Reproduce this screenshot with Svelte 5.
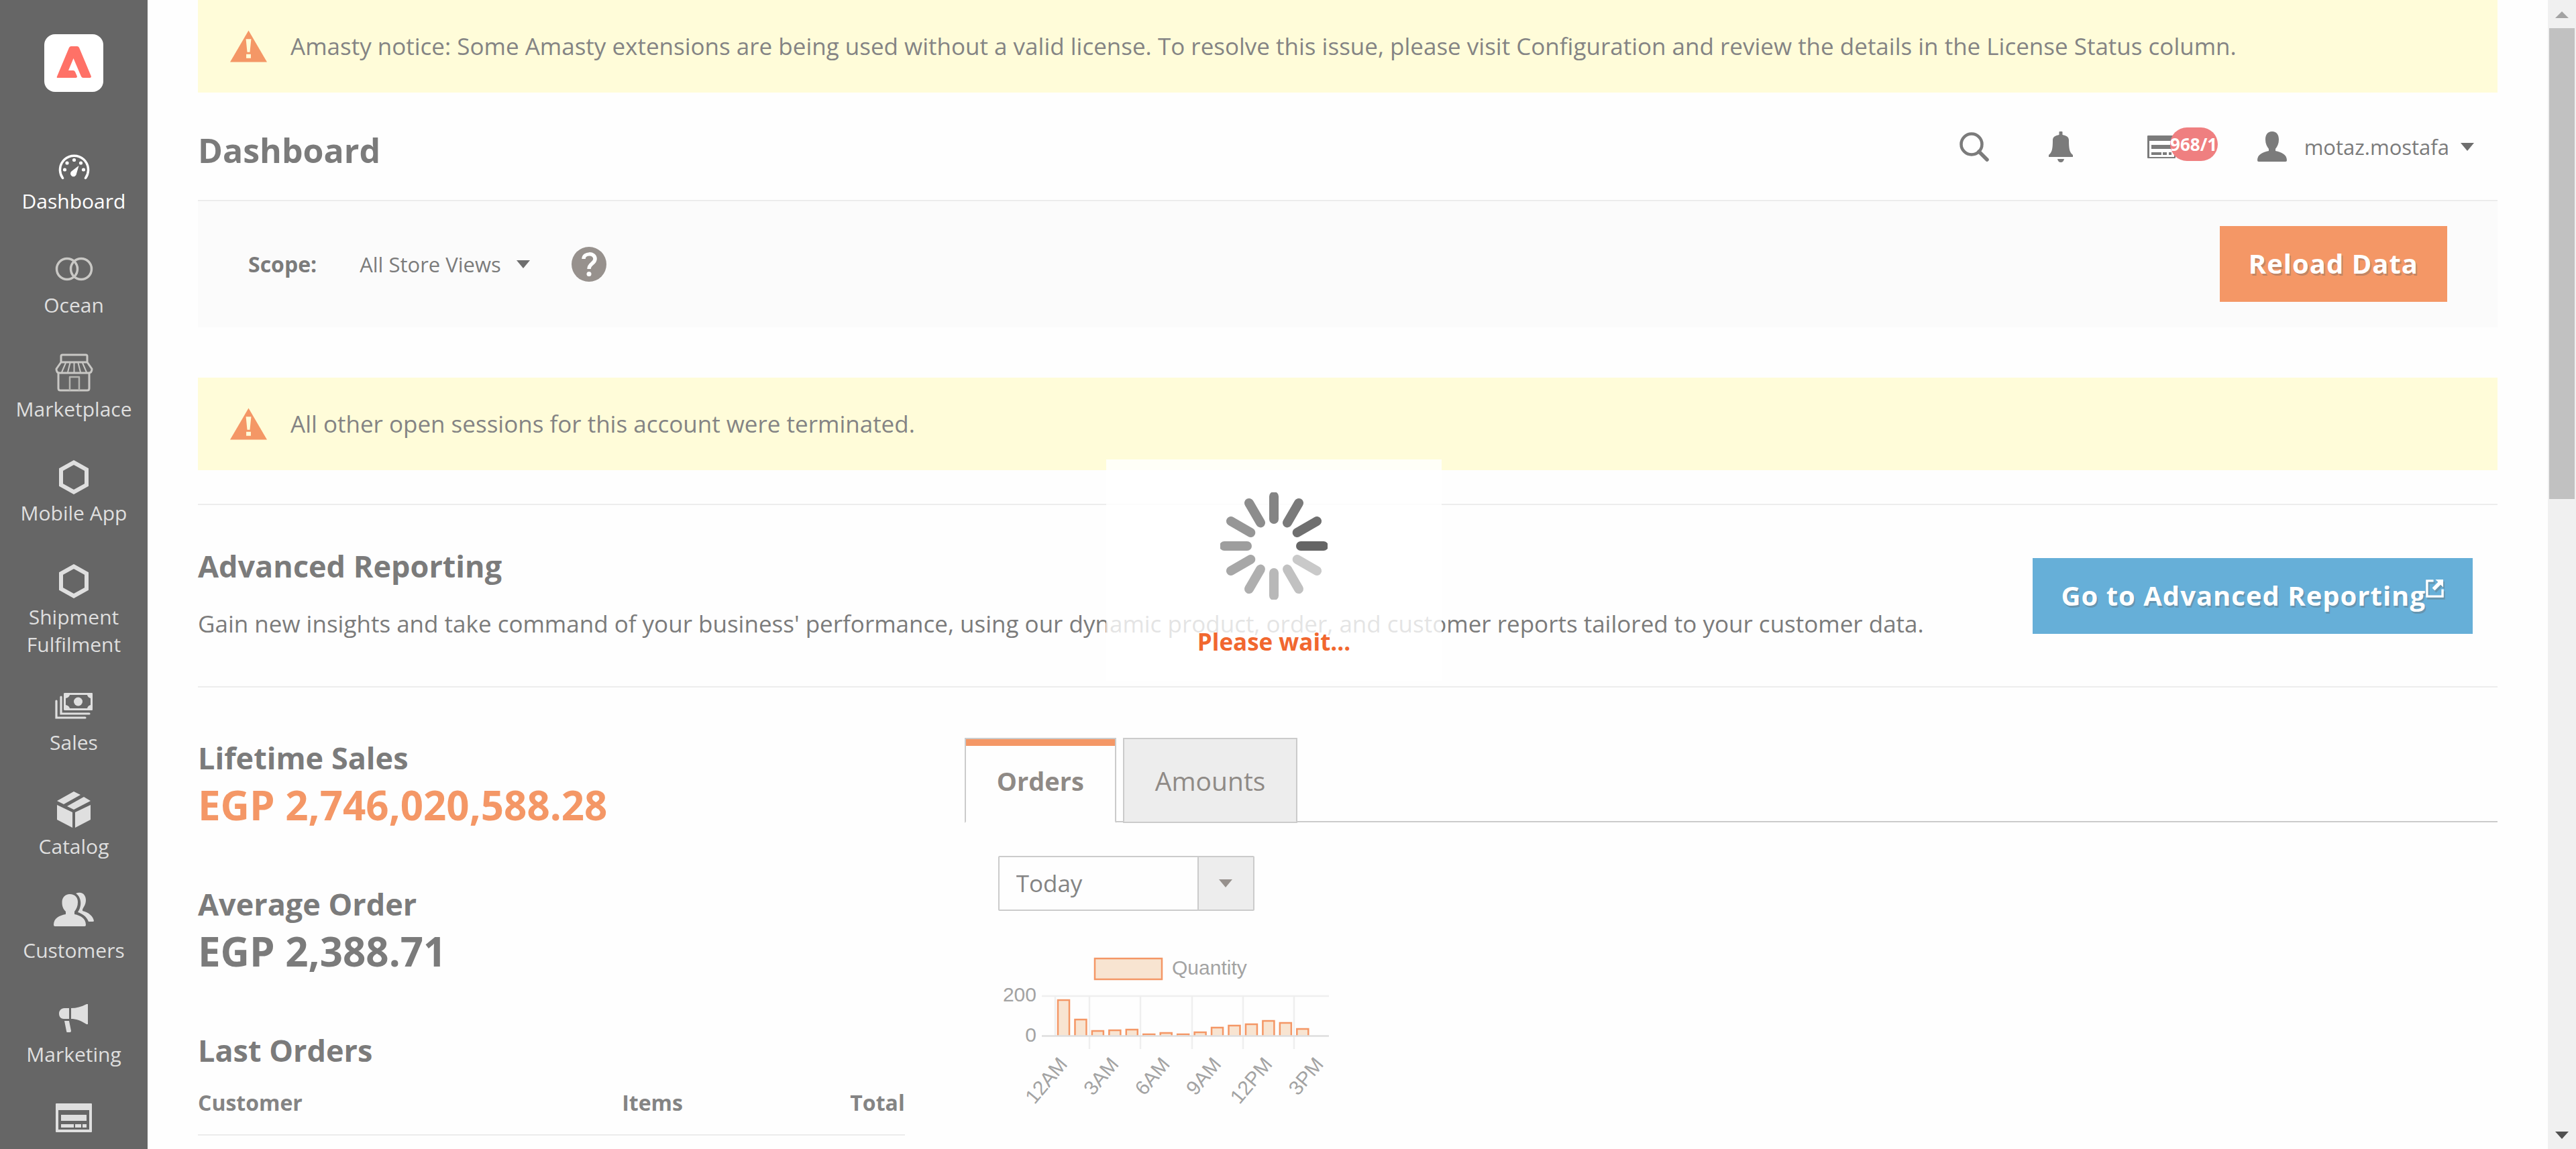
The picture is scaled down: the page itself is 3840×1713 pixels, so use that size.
<script>
  const menu = [
    { id: 'dashboard', label: 'Dashboard', active: true },
    { id: 'ocean', label: 'Ocean' },
    { id: 'market', label: 'Marketplace' },
    { id: 'hex', label: 'Mobile App' },
    { id: 'hex', label: 'Shipment Fulfilment' },
    { id: 'sales', label: 'Sales' },
    { id: 'catalog', label: 'Catalog' },
    { id: 'customers', label: 'Customers' },
    { id: 'marketing', label: 'Marketing' },
    { id: 'content', label: '' }
  ];

  const barTops = [90, 119, 136, 135, 134, 141, 139, 141, 138, 131, 128, 126, 121, 124, 133];
  const pitch = 25.45;
  const bars = barTops.map((top, i) => ({ x: 89 + i * pitch, top }));
  const hours = ['12AM', '3AM', '6AM', '9AM', '12PM', '3PM'].map((text, i) => ({
    text,
    x: 97 + i * 3 * pitch
  }));
  const gridX = [136, 212, 289, 365, 441];

  const spokes = [
    '#656565', '#c9c9c9', '#c1c1c1', '#b8b8b8', '#afafaf', '#a7a7a7',
    '#9e9e9e', '#969696', '#8d8d8d', '#848484', '#7a7a7a', '#6f6f6f'
  ];
</script>

{#snippet message(text)}
  <div class="message">
    <svg class="warn" viewBox="0 0 56 48" aria-hidden="true">
      <path d="M28 0 56 48H0Z" fill="#f49766" />
      <path d="M24 13h8l-2 20h-4zM24.500 36h7v6h-7z" fill="#fffcd9" />
    </svg>
    <p>{text}</p>
  </div>
{/snippet}

<div class="shell">
  <aside class="sidebar">
    <a class="logo" href="#home" aria-label="Home">
      <svg viewBox="0 0 88 86" aria-hidden="true">
        <path
          fill="#ff7167"
          d="M37 20Q38 18 40 18H49Q51 18 52 20L70 63Q70 65 68 65H58Q56 65 55 63L43.500 36L36 54H43Q45 54 46 56L49 63Q49 65 47 65H20Q18 65 19 63Z"
        />
      </svg>
    </a>
    <nav aria-label="Main">
      {#each menu as item}
        <a class="item" class:active={item.active} href="#{item.id}" aria-label={item.label || item.id}>
          <svg viewBox="0 0 60 60" aria-hidden="true">
            {#if item.id === 'dashboard'}
              <path d="M13.500 49.500A21 21 0 1 1 47.500 49.500" fill="none" stroke="currentColor" stroke-width="3.500" stroke-linecap="round" />
              <g fill="currentColor">
                <circle cx="16.500" cy="37" r="2.600" /><circle cx="20" cy="27" r="2.600" />
                <circle cx="30.500" cy="22.500" r="2.600" /><circle cx="40.500" cy="27" r="2.600" />
                <circle cx="44.500" cy="37" r="2.600" />
                <path d="M37.500 31 34 43A4.500 4.500 0 1 1 27 39Z" />
              </g>
            {:else if item.id === 'ocean'}
              <g fill="none" stroke="#c9c8c5" stroke-width="3.500">
                <circle cx="20" cy="30" r="15.500" /><circle cx="41" cy="30" r="15.500" />
              </g>
            {:else if item.id === 'market'}
              <g fill="none" stroke="#c9c8c5" stroke-width="3" stroke-linejoin="round">
                <path d="M11 14V5q0-2 2-2H48q2 0 2 2V14M11 14H50L57 24Q57 30 52 30H9Q4 30 4 24Z" />
                <path d="M7 30V53q0 3 3 3H50q3 0 3-3V30" />
                <path d="M24 56V36H38V56" stroke-width="2.500" stroke="#b5b4b0" />
                <path d="M18 15 12 29M24.500 15 21 29M30.500 15V29M36.500 15 40 29M43 15 49 29" stroke-width="2" />
              </g>
            {:else if item.id === 'hex'}
              <path d="M30 8.500 49 19V42L30 52.500 11 42V19Z" fill="none" stroke="currentColor" stroke-width="6" />
            {:else if item.id === 'sales'}
              <path d="M4 22V47H47M11 16V41H53" fill="none" stroke="currentColor" stroke-width="3.200" stroke-linecap="round" />
              <path
                fill="currentColor"
                fill-rule="evenodd"
                d="M17 10H57q1 0 1 1V35q0 1-1 1H17q-2 0-2-1V11q0-1 2-1ZM24 13Q23 17 18 18V28Q23 29 24 33H50Q51 29 55 28V18Q51 17 50 13Z"
              />
              <circle cx="36.500" cy="23" r="6.500" fill="currentColor" />
            {:else if item.id === 'catalog'}
              <path
                fill="currentColor"
                d="M30 2 40 7 15 21 5 16ZM45 10 55 16 30 29 20 24ZM5 22 28 33V56L5 44ZM55 22 32 33V56L55 44Z"
              />
            {:else if item.id === 'customers'}
              <path
                fill="currentColor"
                d="M24 0C32 0 36 5 36 12C36 18 34 22 31 26V30C40 32 48 36 48 46Q48 48 46 48H2Q0 48 0 46C0 36 8 32 18 30V26C14 22 12.500 18 12.500 12C12.500 5 17 0 24 0Z"
              />
              <path
                fill="currentColor"
                d="M33-1C43-5 48 2 48 9C48 16 44 20 43 23V25C52 27 59 33 60 40Q60 41 58 41H52C49 33 42 29 36 27C43 17 41 4 33-1Z"
              />
            {:else if item.id === 'marketing'}
              <path
                fill="currentColor"
                d="M23 15V31H15C10 31 8 27 8 23C8 19 11 15 16 15ZM26 15C34 15 41 13 49 9H51V39H49C41 34 34 31 26 31ZM16 34H23L26 49Q26 51 24 51H20Q19 51 19 49Z"
              />
            {:else}
              <path
                fill="currentColor"
                fill-rule="evenodd"
                d="M4 2H56q1 0 1 1V44q0 1-1 1H4q-1 0-1-1V3q0-1 1-1ZM7 12V41H53V12ZM11 19H49V28H11ZM11 33H30V38H11ZM32 33H41V38H32ZM43 33H49V38H43Z"
              />
            {/if}
          </svg>
          {#if item.label}<span>{item.label}</span>{/if}
        </a>
      {/each}
    </nav>
  </aside>

  <main>
    {@render message(
      'Amasty notice: Some Amasty extensions are being used without a valid license. To resolve this issue, please visit Configuration and review the details in the License Status column.'
    )}

    <header>
      <h1>Dashboard</h1>
      <div class="tools">
        <button class="search" aria-label="Search">
          <svg viewBox="0 0 44 46" aria-hidden="true">
            <circle cx="18" cy="19" r="15.500" fill="none" stroke="#7b7b7b" stroke-width="4.500" />
            <path d="M29 30 41 42" stroke="#7b7b7b" stroke-width="5.500" stroke-linecap="round" />
          </svg>
        </button>
        <button class="bell" aria-label="Notifications">
          <svg viewBox="0 0 38 46" aria-hidden="true">
            <path
              fill="#7b7b7b"
              d="M16.500 1q0-1 1-1h3q1 0 1 1V5C27 6 31 8 31 13C31 26 32 31 37 35V38H1V35C6 31 7 26 7 13C7 8 11 6 16.500 5ZM14 41H24Q23 46 19 46T14 41Z"
            />
          </svg>
        </button>
        <button class="queue" aria-label="Queue 968/1">
          <svg viewBox="0 0 42 34" aria-hidden="true">
            <path
              fill="#7b7b7b"
              fill-rule="evenodd"
              d="M1 0H41q1 0 1 1V33q0 1-1 1H1q-1 0-1-1V1q0-1 1-1ZM3 8V32H40V8ZM6 14H37V20H6ZM6 25H21V29H6ZM23 25H29V29H23ZM32 25H36V29H32Z"
            />
          </svg>
          <span class="badge">968/1</span>
        </button>
        <button class="user">
          <svg viewBox="0 0 44 46" aria-hidden="true">
            <path
              fill="#7b7b7b"
              d="M22 0C29 0 32 5 32 12C32 18 30 22 27 26V29C36 31 44 34 44 43Q44 45 42 45H2Q0 45 0 43C0 34 8 31 17 29V26C14 22 12 18 12 12C12 5 15 0 22 0Z"
            />
          </svg>
          <span>motaz.mostafa</span>
          <i class="caret"></i>
        </button>
      </div>
    </header>

    <div class="scope">
      <strong id="scope-label">Scope:</strong>
      <button class="switcher" aria-describedby="scope-label">
        All Store Views <i class="caret"></i>
      </button>
      <a class="help" href="#help" aria-label="What is this?">
        <svg viewBox="0 0 52 52" aria-hidden="true">
          <circle cx="26" cy="26" r="26" fill="#97918d" />
          <path d="M18 18C18 9 35 8 35 18C35 25 26 25 26 33" fill="none" stroke="#fff" stroke-width="5.500" />
          <circle cx="26" cy="40.500" r="3.500" fill="#fff" />
        </svg>
      </a>
      <button class="action primary">Reload Data</button>
    </div>

    <div class="session">
      {@render message('All other open sessions for this account were terminated.')}
    </div>

    <section class="advanced">
      <div>
        <h2>Advanced Reporting</h2>
        <p>
          Gain new insights and take command of your business' performance, using our dynamic product,
          order, and customer reports tailored to your customer data.
        </p>
      </div>
      <a class="action secondary" href="#reporting">
        Go to Advanced Reporting<svg viewBox="0 0 28 28" aria-hidden="true">
          <path d="M12 2H2V26H26V15" fill="none" stroke="#fff" stroke-width="3.500" />
          <path d="M15 0H27V12L23 8 14 17 10 13 19 4Z" fill="#fff" />
        </svg>
      </a>
    </section>

    <div class="columns">
      <div class="stats">
        <section>
          <h2>Lifetime Sales</h2>
          <p class="amount sales">EGP 2,746,020,588.28</p>
        </section>
        <section>
          <h2>Average Order</h2>
          <p class="amount">EGP 2,388.71</p>
        </section>
        <section>
          <h2 id="last-orders">Last Orders</h2>
          <table aria-labelledby="last-orders">
            <thead>
              <tr><th>Customer</th><th>Items</th><th>Total</th></tr>
            </thead>
          </table>
        </section>
      </div>

      <div class="diagrams">
        <div class="tabs" role="tablist">
          <button class="tab current" role="tab" aria-selected="true">Orders</button>
          <button class="tab" role="tab" aria-selected="false">Amounts</button>
        </div>
        <div class="panel">
          <div class="select">
            <select aria-label="Period"><option>Today</option></select>
            <span class="arrow"><i class="caret"></i></span>
          </div>
          <svg class="chart" viewBox="0 0 510 260" role="img" aria-label="Quantity of orders by hour">
            <rect x="144" y="29" width="100" height="31" fill="#f8e4d1" stroke="#f49766" stroke-width="2.500" />
            <text x="259" y="53">Quantity</text>
            <text x="57" y="93" text-anchor="end">200</text>
            <text x="57" y="153" text-anchor="end">0</text>
            <path d="M65 85H493M85 85V145" class="grid" />
            {#each gridX as x}<path d="M{x} 85V164" class="grid" />{/each}
            {#each bars as bar}
              <path
                d="M{bar.x} 144V{bar.top + 1}h17V144"
                fill="#f8e4d1"
                stroke="#f49766"
                stroke-width="2.500"
              />
            {/each}
            <path d="M65 144.500H493" class="axis" />
            {#each hours as hour}
              <text transform="translate({hour.x} 181) rotate(-50)" y="10" text-anchor="end">{hour.text}</text>
            {/each}
          </svg>
        </div>
      </div>
    </div>
  </main>

  <div class="scrollbar" aria-hidden="true">
    <svg viewBox="0 0 42 42"><path d="M11 27 21 17 31 27Z" fill="#a3a3a3" /></svg>
    <div class="thumb"></div>
    <svg viewBox="0 0 42 42"><path d="M11 16 21 27 31 16Z" fill="#505050" /></svg>
  </div>

  <div class="loader" role="status">
    <svg viewBox="0 0 160 160" aria-hidden="true">
      {#each spokes as color, i}
        <path
          d="M120 80H154"
          stroke={color}
          stroke-width="14"
          stroke-linecap="round"
          transform="rotate({i * 30} 80 80)"
        />
      {/each}
    </svg>
    <p>Please wait...</p>
  </div>
</div>

<style>
  :global(body) {
    margin: 0;
    background: #fefefe;
    overflow: hidden;
  }
  .shell {
    position: relative;
    display: grid;
    grid-template-columns: 220px minmax(0, 1fr) 42px;
    height: 100vh;
    overflow: hidden;
    font-family: 'Open Sans', 'Noto Sans', sans-serif;
    font-size: 35px;
    line-height: 48px;
    color: #7b7b7b;
  }
  svg {
    display: block;
  }
  h1,
  h2,
  p {
    margin: 0;
  }
  h1,
  h2 {
    font-weight: 700;
  }
  a {
    color: inherit;
    text-decoration: none;
  }
  button {
    border: 0;
    padding: 0;
    background: none;
    color: inherit;
    font: inherit;
  }
  .caret {
    border: 10px solid transparent;
    border-top: 12px solid #6e6e6e;
    border-bottom: 0;
  }

  .sidebar {
    background: #666;
    overflow: hidden;
  }
  .logo {
    display: block;
    width: 88px;
    margin: 51px auto 63px;
    border-radius: 16px;
    background: #fff;
  }
  .item {
    display: flex;
    flex-direction: column;
    align-items: center;
    gap: 3px;
    box-sizing: border-box;
    min-height: 155px;
    padding: 16px 20px 26px;
    color: #dfdfdf;
    font-size: 30px;
    line-height: 41px;
    text-align: center;
  }
  .item.active {
    color: #fff;
  }
  .item svg {
    width: 60px;
    height: 60px;
    overflow: visible;
  }

  main {
    padding: 0 75px;
    overflow: hidden;
  }
  .message {
    display: flex;
    align-items: center;
    gap: 35px;
    padding: 45px 48px;
    background: #fffcd9;
    color: #848484;
  }
  .warn {
    width: 55px;
    height: 48px;
  }

  header {
    display: flex;
    justify-content: space-between;
    align-items: flex-start;
    padding: 52px 35px 40px 0;
    border-bottom: 2px solid #ececec;
  }
  h1 {
    font-size: 50px;
    line-height: 68px;
  }
  .tools {
    display: flex;
    align-items: center;
    height: 58px;
    font-size: 31px;
  }
  .search svg {
    width: 44px;
  }
  .bell {
    margin-left: 88px;
  }
  .bell svg {
    width: 38px;
  }
  .queue {
    position: relative;
    margin-left: 110px;
  }
  .queue svg {
    width: 42px;
  }
  .badge {
    position: absolute;
    left: 34px;
    bottom: -4px;
    display: flex;
    justify-content: center;
    align-items: center;
    width: 71px;
    height: 50px;
    border-radius: 25px;
    background: #ef7f80;
    color: #fff;
    font-size: 26px;
    font-weight: 700;
  }
  .user {
    display: flex;
    align-items: center;
    gap: 17px;
    margin-left: 122px;
  }
  .user svg {
    width: 44px;
    margin-right: 9px;
  }

  .scope {
    display: flex;
    align-items: center;
    padding: 37px 75px 38px;
    background: #fbfbfb;
    font-size: 32px;
  }
  .scope strong {
    font-weight: 700;
  }
  .switcher {
    display: flex;
    align-items: center;
    gap: 23px;
    margin: 0 62px 0 64px;
    font-size: 31px;
  }
  .help svg {
    width: 52px;
  }
  .action {
    display: flex;
    padding: 29px 43px 30px;
    color: #fff;
    font-size: 40px;
    font-weight: 700;
    line-height: 54px;
    letter-spacing: 1px;
    text-shadow: 2px 3px 0 rgba(100, 100, 100, 0.35);
  }
  .primary {
    margin-left: auto;
    background: #f49766;
  }
  .secondary {
    background: #66afd8;
  }
  .secondary svg {
    width: 27px;
    height: 27px;
    margin-top: 3px;
    filter: drop-shadow(2px 3px 0 rgba(100, 100, 100, 0.35));
  }

  .session {
    margin: 75px 0 50px;
  }
  .advanced {
    display: flex;
    justify-content: space-between;
    align-items: center;
    padding: 60px 37px 69px 0;
    border: solid #ededed;
    border-width: 2px 0;
  }
  .advanced .action {
    margin-top: 9px;
  }
  h2 {
    font-size: 45px;
    line-height: 62px;
  }
  .advanced h2 {
    margin-bottom: 31px;
  }

  .columns {
    display: grid;
    grid-template-columns: 1fr 2fr;
  }
  .stats {
    display: flex;
    flex-direction: column;
    gap: 78px;
    padding: 74px 89px 0 0;
  }
  .amount {
    font-size: 60px;
    font-weight: 700;
    line-height: 78px;
  }
  .amount.sales {
    color: #f49766;
  }
  table {
    width: 100%;
    border-collapse: collapse;
    font-size: 32px;
    line-height: 44px;
  }
  th {
    padding: 25px 0;
    border-bottom: 2px solid #ececec;
    color: #848484;
    font-weight: 700;
    text-align: left;
  }
  th:first-child {
    width: 60%;
  }
  th:last-child {
    text-align: right;
  }

  .diagrams {
    padding-top: 75px;
  }
  .tabs {
    display: flex;
    gap: 10px;
    border-bottom: 2px solid #cbcbcb;
  }
  .tab {
    margin-bottom: -3px;
    padding: 35px 46px 34px;
    border: 2px solid #cbcbcb;
    background: #ededed;
    color: #8f8a86;
    font-size: 39px;
    line-height: 54px;
  }
  .tab.current {
    border-bottom-color: #fefefe;
    background: #fefefe;
    box-shadow: inset 0 10px #f49766;
    font-size: 38px;
    font-weight: 700;
  }
  .panel {
    padding: 50px;
  }
  .select {
    position: relative;
    width: 382px;
  }
  select {
    display: block;
    box-sizing: border-box;
    width: 100%;
    height: 82px;
    padding: 0 25px;
    border: 2px solid #cbcbcb;
    border-radius: 2px;
    background: #fefefe;
    color: #848484;
    font: inherit;
    appearance: none;
  }
  .arrow {
    position: absolute;
    inset: 2px 2px 2px auto;
    display: flex;
    justify-content: center;
    align-items: center;
    width: 81px;
    border-left: 2px solid #cbcbcb;
    background: #ededed;
    pointer-events: none;
  }
  .arrow .caret {
    border-top-color: #97918d;
  }
  .chart {
    width: 510px;
    margin-top: 42px;
    font-family: 'Liberation Sans', sans-serif;
    font-size: 30px;
    fill: #a3a3a3;
  }
  .grid,
  .axis {
    fill: none;
    stroke: #efefef;
    stroke-width: 2.5;
  }
  .axis {
    stroke: #dedede;
  }

  .scrollbar {
    display: flex;
    flex-direction: column;
    background: #f0f0f0;
  }
  .thumb {
    flex: 0 0 41%;
    margin: 0 2px auto;
    background: #c1c1c1;
  }
  .loader {
    position: absolute;
    top: 40%;
    left: calc(50% - 21px);
    display: flex;
    flex-direction: column;
    align-items: center;
    box-sizing: border-box;
    width: 500px;
    height: 330px;
    margin-left: -250px;
    padding-top: 49px;
    background: rgba(255, 255, 255, 0.8);
    color: #f1672f;
    font-weight: 700;
  }
  .loader svg {
    width: 160px;
    margin-bottom: 39px;
  }
</style>
